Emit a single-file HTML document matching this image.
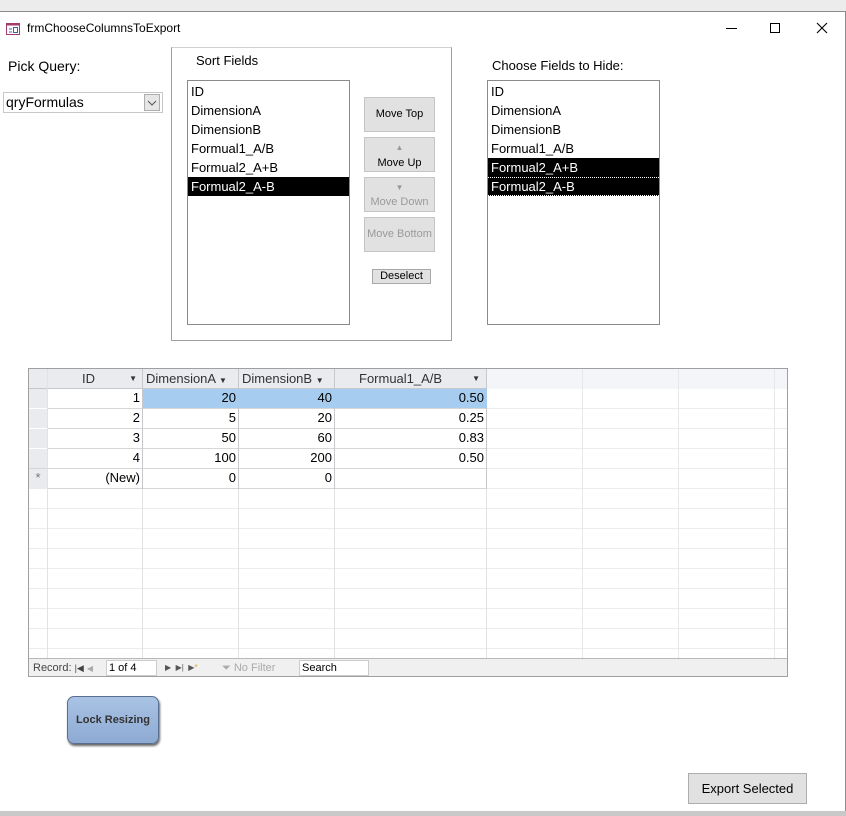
<!DOCTYPE html>
<html><head><meta charset="utf-8"><style>
*{margin:0;padding:0;box-sizing:border-box}
body{width:846px;height:816px;background:#fff;position:relative;overflow:hidden;font-family:"Liberation Sans","DejaVu Sans",sans-serif;font-size:13px;color:#000}
.a{position:absolute}
.lb{position:absolute;border:1px solid #8a8a8a;background:#fff}
.lb div{height:19px;line-height:19px;padding-left:3px;font-size:13px;white-space:nowrap}
.sel{background:#000;color:#fff}
.btn{position:absolute;background:#e1e1e1;border:1px solid #c4c4c4;font-size:11px;text-align:center}
.g{position:absolute;left:28px;top:368px;width:760px;height:309px;border:1px solid #a0a0a0;background:#fff;overflow:hidden}
.cell{position:absolute;height:20px;line-height:20px;text-align:right;padding-right:2px;font-size:13px}
</style></head><body>
<div class="a" style="left:0;top:0;width:846px;height:12px;background:#ececec;border-bottom:1px solid #8c8c8c"></div>
<div class="a" style="left:845px;top:12px;width:1px;height:804px;background:#8c8c8c"></div>
<div class="a" style="left:0;top:811px;width:846px;height:5px;background:#c8c8c8"></div>
<svg class="a" style="left:6px;top:23px" width="14" height="12"><rect x="0.5" y="0.5" width="13" height="11" fill="#fff" stroke="#a33b6b"/><rect x="0.5" y="0.5" width="13" height="2" fill="#a33b6b"/><line x1="3" y1="6" x2="6" y2="6" stroke="#3b64b0"/><line x1="3" y1="9" x2="6" y2="9" stroke="#3b64b0"/><rect x="7.5" y="4.5" width="4" height="5" fill="none" stroke="#3b64b0"/></svg>
<div class="a" style="left:27px;top:21px;font-size:12px">frmChooseColumnsToExport</div>
<div class="a" style="left:726px;top:28px;width:11px;height:1px;background:#000"></div>
<div class="a" style="left:770px;top:23px;width:10px;height:10px;border:1px solid #000"></div>
<svg class="a" style="left:816px;top:22px" width="12" height="12"><path d="M1 1L11 11M11 1L1 11" stroke="#000" stroke-width="1.1"/></svg>

<div class="a" style="left:8px;top:58px;font-size:14px">Pick Query:</div>
<div class="a" style="left:3px;top:92px;width:160px;height:21px;border:1px solid #c8c8c8;background:#fff"><span style="position:absolute;left:2px;top:1px;font-size:14px">qryFormulas</span><div style="position:absolute;right:2px;top:1px;width:16px;height:17px;background:#e6e6e6;border:1px solid #adadad"><svg width="14" height="15"><path d="M3 6L7 10L11 6" fill="none" stroke="#555"/></svg></div></div>

<div class="a" style="left:171px;top:47px;width:281px;height:294px;border:1px solid #a0a0a0;border-top-color:#d0d0d0"></div>
<div class="a" style="left:196px;top:53px;font-size:13px">Sort Fields</div>
<div class="lb" style="left:187px;top:80px;width:163px;height:245px;padding-top:1px">
<div>ID</div><div>DimensionA</div><div>DimensionB</div><div>Formual1_A/B</div><div>Formual2_A+B</div><div class="sel">Formual2_A-B</div></div>
<div class="btn" style="left:364px;top:97px;width:71px;height:35px;line-height:33px">Move Top</div>
<div class="btn" style="left:364px;top:137px;width:71px;height:35px"><div style="color:#999;font-size:8px;line-height:8px;margin-top:6px">▲</div><div style="margin-top:5px">Move Up</div></div>
<div class="btn" style="left:364px;top:177px;width:71px;height:35px;color:#9a9a9a"><div style="font-size:8px;line-height:8px;margin-top:6px">▼</div><div style="margin-top:4px">Move Down</div></div>
<div class="btn" style="left:364px;top:217px;width:71px;height:35px;line-height:33px;color:#9a9a9a">Move Bottom</div>
<div class="btn" style="left:372px;top:269px;width:59px;height:15px;line-height:13px;border-color:#a8a8a8">Deselect</div>

<div class="a" style="left:492px;top:58px;font-size:13px">Choose Fields to Hide:</div>
<div class="lb" style="left:487px;top:80px;width:173px;height:245px;padding-top:1px">
<div>ID</div><div>DimensionA</div><div>DimensionB</div><div>Formual1_A/B</div><div class="sel">Formual2_A+B</div><div class="sel" style="border-top:1px dotted #fff;border-bottom:1px dotted #fff;height:19px;line-height:17px">Formual2_A-B</div></div>

<div class="g">
<div class="a" style="left:0;top:0;width:760px;height:20px;background:#f3f5f9"></div>
<div class="a" style="left:0;top:0;width:458px;height:20px;background:#e9ebef"></div>
<div class="a" style="left:0;top:0;width:19px;height:120px;background:#e9ebef"></div>
<!-- horizontal lines -->
<div class="a" style="left:0;top:19px;width:458px;height:1px;background:#c5c8cd"></div>
<div class="a" style="left:19px;top:39px;width:439px;height:1px;background:#d6d6d6"></div>
<div class="a" style="left:19px;top:59px;width:439px;height:1px;background:#d6d6d6"></div>
<div class="a" style="left:19px;top:79px;width:439px;height:1px;background:#d6d6d6"></div>
<div class="a" style="left:0;top:99px;width:458px;height:1px;background:#d6d6d6"></div>
<div class="a" style="left:19px;top:119px;width:439px;height:1px;background:#d6d6d6"></div>
<div class="a" style="left:0;top:39px;width:19px;height:1px;background:#fff"></div>
<div class="a" style="left:0;top:59px;width:19px;height:1px;background:#fff"></div>
<div class="a" style="left:0;top:79px;width:19px;height:1px;background:#fff"></div>
<div class="a" style="left:0;top:0;width:760px;height:289px;background:repeating-linear-gradient(to bottom,transparent 0,transparent 19px,#ececec 19px,#ececec 20px);clip-path:inset(120px 0 0 0)"></div>
<div class="a" style="left:458px;top:20px;width:302px;height:100px;background:repeating-linear-gradient(to bottom,transparent 0,transparent 19px,#ececec 19px,#ececec 20px)"></div>
<!-- vertical lines -->
<div class="a" style="left:18px;top:0;width:1px;height:289px;background:#e2e2e2"></div>
<div class="a" style="left:113px;top:0;width:1px;height:289px;background:#e2e2e2"></div>
<div class="a" style="left:209px;top:0;width:1px;height:289px;background:#e2e2e2"></div>
<div class="a" style="left:305px;top:0;width:1px;height:289px;background:#e2e2e2"></div>
<div class="a" style="left:457px;top:0;width:1px;height:289px;background:#e2e2e2"></div>
<div class="a" style="left:553px;top:0;width:1px;height:289px;background:#e8e8e8"></div>
<div class="a" style="left:649px;top:0;width:1px;height:289px;background:#e8e8e8"></div>
<div class="a" style="left:745px;top:0;width:1px;height:289px;background:#e8e8e8"></div>
<div class="a" style="left:113px;top:0;width:1px;height:120px;background:#c5c8cd"></div>
<div class="a" style="left:209px;top:0;width:1px;height:120px;background:#c5c8cd"></div>
<div class="a" style="left:305px;top:0;width:1px;height:120px;background:#c5c8cd"></div>
<div class="a" style="left:457px;top:0;width:1px;height:120px;background:#c5c8cd"></div>
<!-- header -->
<div class="a" style="left:19px;top:2px;width:94px;font-size:13px;color:#333"><span style="margin-left:34px">ID</span><span style="position:absolute;right:5px;font-size:8px;top:3px">▼</span></div>
<div class="a" style="left:117px;top:2px;font-size:13px;color:#333">DimensionA <span style="font-size:8px">▼</span></div>
<div class="a" style="left:213px;top:2px;font-size:13px;color:#333">DimensionB <span style="font-size:8px">▼</span></div>
<div class="a" style="left:306px;top:2px;width:151px;font-size:13px;color:#333"><span style="margin-left:24px">Formual1_A/B</span><span style="position:absolute;right:6px;font-size:8px;top:3px">▼</span></div>
<!-- row 1 highlight -->
<div class="a" style="left:114px;top:20px;width:344px;height:19px;background:#a6cdf0"></div>
<div class="cell" style="left:19px;top:19px;width:94px">1</div><div class="cell" style="left:114px;top:19px;width:95px">20</div><div class="cell" style="left:210px;top:19px;width:95px">40</div><div class="cell" style="left:306px;top:19px;width:151px">0.50</div>
<div class="cell" style="left:19px;top:39px;width:94px">2</div><div class="cell" style="left:114px;top:39px;width:95px">5</div><div class="cell" style="left:210px;top:39px;width:95px">20</div><div class="cell" style="left:306px;top:39px;width:151px">0.25</div>
<div class="cell" style="left:19px;top:59px;width:94px">3</div><div class="cell" style="left:114px;top:59px;width:95px">50</div><div class="cell" style="left:210px;top:59px;width:95px">60</div><div class="cell" style="left:306px;top:59px;width:151px">0.83</div>
<div class="cell" style="left:19px;top:79px;width:94px">4</div><div class="cell" style="left:114px;top:79px;width:95px">100</div><div class="cell" style="left:210px;top:79px;width:95px">200</div><div class="cell" style="left:306px;top:79px;width:151px">0.50</div>
<div class="cell" style="left:0;top:99px;width:18px;text-align:center;color:#777;padding:0">*</div>
<div class="cell" style="left:19px;top:99px;width:94px">(New)</div><div class="cell" style="left:114px;top:99px;width:95px">0</div><div class="cell" style="left:210px;top:99px;width:95px">0</div>
<!-- nav bar -->
<div class="a" style="left:0;top:289px;width:760px;height:20px;background:#f0f0f0;border-top:1px solid #b8b8b8"></div>
<div class="a" style="left:4px;top:293px;font-size:11px;color:#444">Record: <span style="font-size:9px">|◀</span> <span style="color:#aaa;font-size:8px">◀</span></div>
<div class="a" style="left:77px;top:291px;width:51px;height:16px;background:#fff;border:1px solid #ccc;font-size:11px;line-height:14px;padding-left:2px">1 of 4</div>
<div class="a" style="left:136px;top:294px;font-size:8px;color:#555">▶ &nbsp;▶| &nbsp;▶<span style="color:#e0a040">*</span></div>
<div class="a" style="left:193px;top:293px;font-size:11px;color:#aaa">⏷ No Filter</div>
<div class="a" style="left:270px;top:291px;width:70px;height:16px;background:#fff;border:1px solid #ccc;font-size:11px;line-height:14px;padding-left:2px">Search</div>
</div>

<div class="a" style="left:67px;top:696px;width:92px;height:48px;border-radius:7px;background:linear-gradient(#a9c3e4,#8eaad3);border:1px solid #5a6f8f;box-shadow:1px 2px 2px #666;font-size:11px;font-weight:bold;color:#333;text-align:center;line-height:46px">Lock Resizing</div>
<div class="a" style="left:688px;top:773px;width:119px;height:31px;background:#e1e1e1;border:1px solid #adadad;font-size:13px;text-align:center;line-height:29px">Export Selected</div>
</body></html>
